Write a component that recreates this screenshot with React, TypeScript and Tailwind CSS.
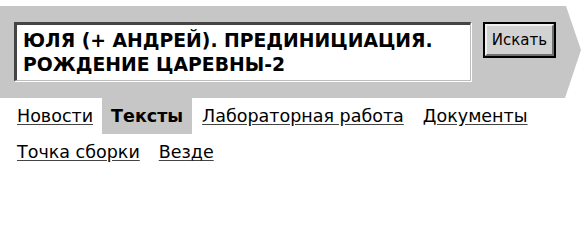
export default function App() {
  return (
    <div className="w-[581px] h-[212px] bg-white font-['DejaVu_Sans',sans-serif] text-black">
      <div className="pt-[6px]">
        <div className="h-[92px] bg-[#c6c6c6] [clip-path:polygon(0_0,566px_0,581px_44px,565px_100%,0_100%)] flex items-start pl-[14px] pt-[16px]">
          <div className="w-[457px] h-[59px] bg-white border-t-[3px] border-l-[3px] border-t-[#444] border-l-[#444] border-b border-r border-b-[#bdbdbd] border-r-[#bdbdbd] shadow-[1px_1px_0_#ffffff] pl-[6px] pt-[4px] text-[18.8px] font-bold leading-[24px] uppercase">
            Юля (+ Андрей). Прединициация. Рождение царевны-2
          </div>
          <button className="ml-[12px] w-[73px] h-[36px] border-2 border-black bg-[#d2d2d2] text-[15px] leading-none">
            <span className="flex h-full w-full items-center justify-center border-t-2 border-l-2 border-t-[#f0f0f0] border-l-[#f0f0f0] border-b-2 border-r-2 border-b-[#707070] border-r-[#707070]">
              Искать
            </span>
          </button>
        </div>
      </div>
      <nav className="flex flex-wrap text-[17.5px] leading-[36px] pl-[8px] w-[560px]">
        <a href="#" className="px-[9px] underline decoration-[#444] underline-offset-2">Новости</a>
        <span className="px-[9px] bg-[#c6c6c6] font-bold">Тексты</span>
        <a href="#" className="px-[10px] underline decoration-[#444] underline-offset-2">Лабораторная работа</a>
        <a href="#" className="px-[9px] underline decoration-[#444] underline-offset-2">Документы</a>
        <a href="#" className="px-[9px] underline decoration-[#444] underline-offset-2">Точка сборки</a>
        <a href="#" className="px-[10px] underline decoration-[#444] underline-offset-2">Везде</a>
      </nav>
    </div>
  );
}
